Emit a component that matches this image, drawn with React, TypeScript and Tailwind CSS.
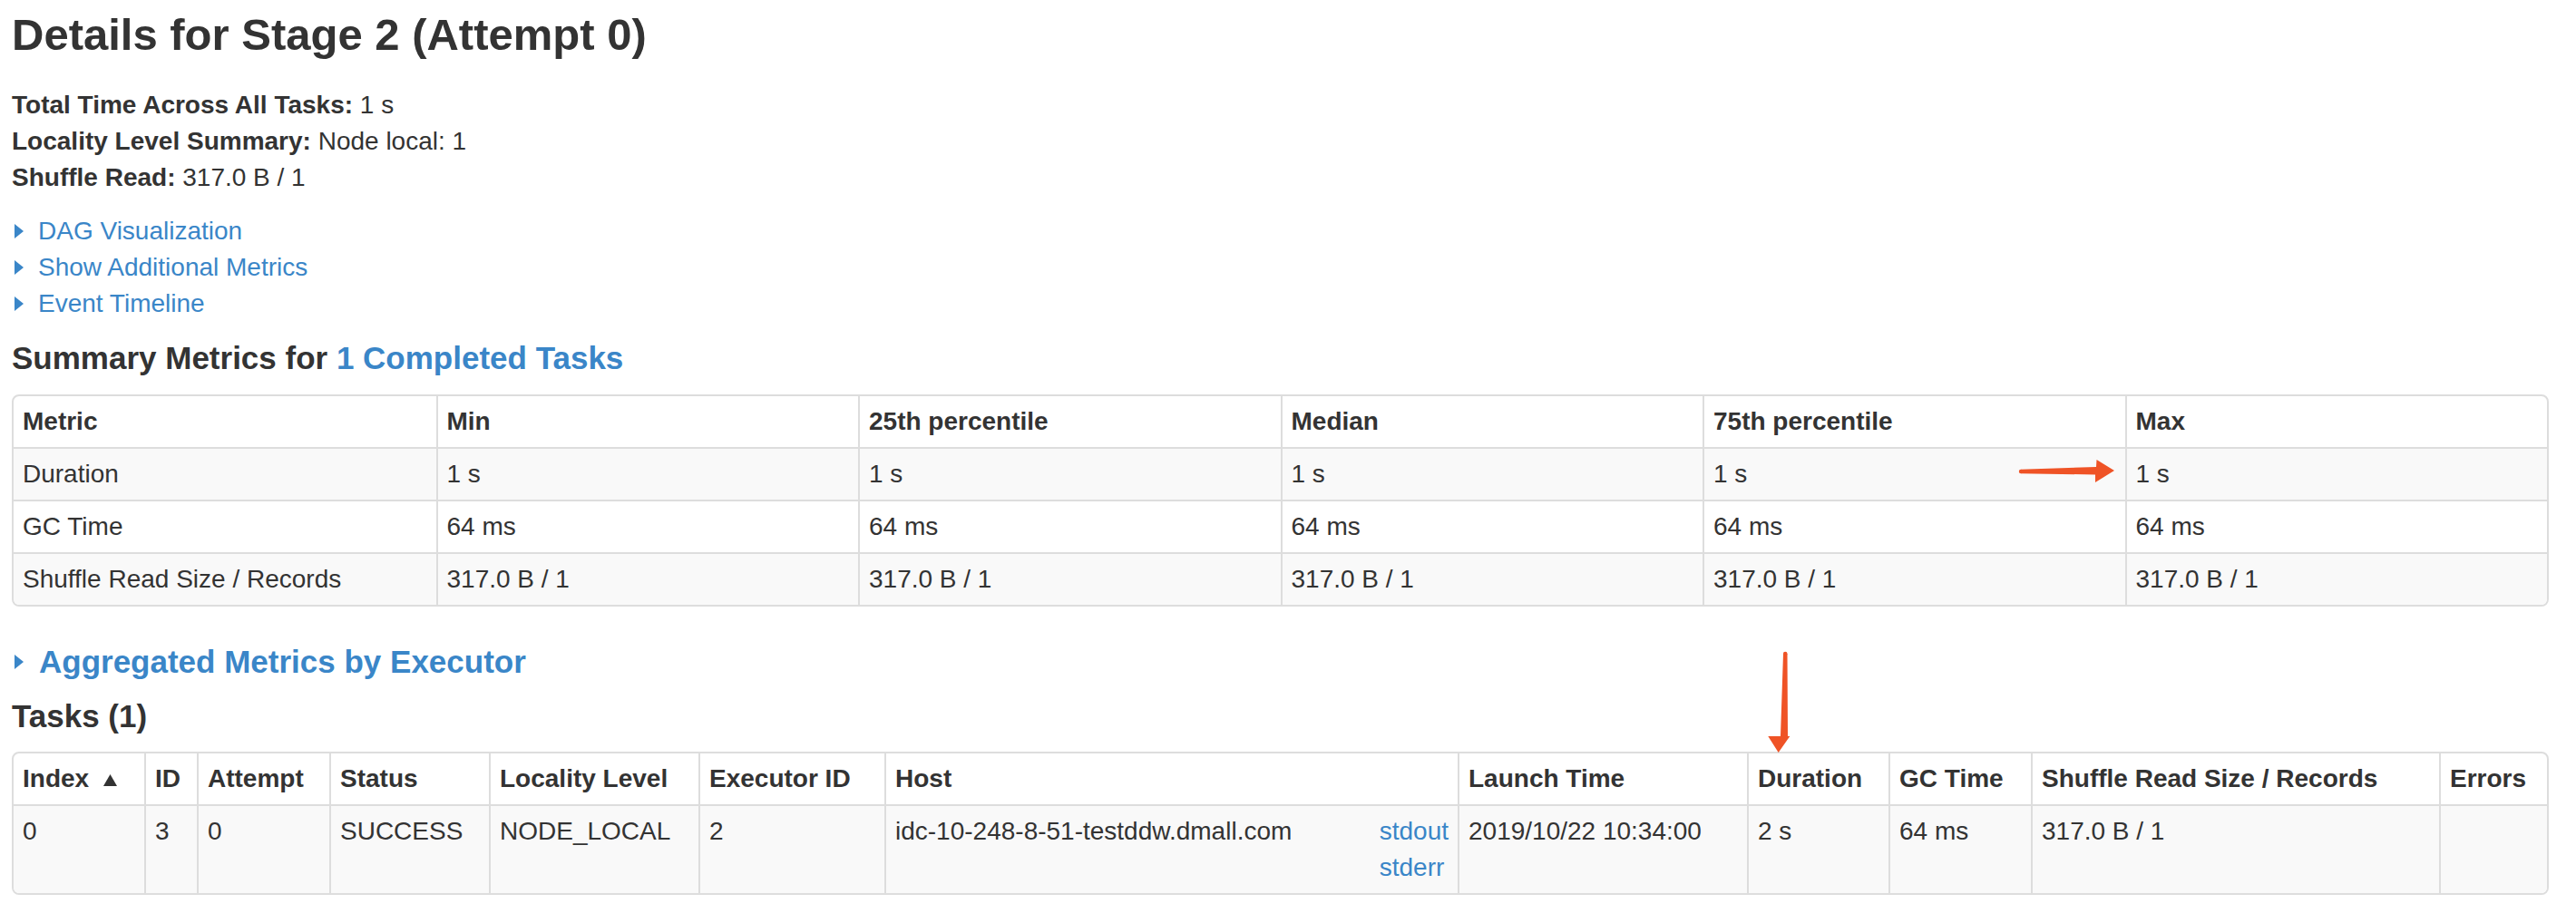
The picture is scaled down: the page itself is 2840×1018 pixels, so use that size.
const LINK = 'text-[#3a86c8]'

function Arrow() {
  return <span className="inline-block w-0 h-0 border-y-[8px] border-y-transparent border-l-[10px] border-l-[#3a86c8]" />
}

const summaryCols = ['Metric', 'Min', '25th percentile', 'Median', '75th percentile', 'Max']
const summaryRows = [
  ['Duration', '1 s', '1 s', '1 s', '1 s', '1 s'],
  ['GC Time', '64 ms', '64 ms', '64 ms', '64 ms', '64 ms'],
  ['Shuffle Read Size / Records', '317.0 B / 1', '317.0 B / 1', '317.0 B / 1', '317.0 B / 1', '317.0 B / 1'],
]

const taskCols = [
  { label: 'Index', w: 144 },
  { label: 'ID', w: 58 },
  { label: 'Attempt', w: 146 },
  { label: 'Status', w: 176 },
  { label: 'Locality Level', w: 231 },
  { label: 'Executor ID', w: 205 },
  { label: 'Host', w: 632 },
  { label: 'Launch Time', w: 319 },
  { label: 'Duration', w: 156 },
  { label: 'GC Time', w: 157 },
  { label: 'Shuffle Read Size / Records', w: 450 },
  { label: 'Errors', w: 119 },
]

function cellCls(col: number, row: number, head: boolean) {
  return [
    'px-[10px] py-[8px] text-left',
    head ? 'font-bold align-bottom' : 'font-normal align-top',
    col === 0 ? '' : 'border-l-2 border-l-[#ddd]',
    row === 0 ? '' : 'border-t-2 border-t-[#ddd]',
  ].join(' ')
}

export default function App() {
  return (
    <div className="relative h-[1018px] overflow-hidden bg-white text-[#333] pl-[13px] pr-[30px] font-['Liberation_Sans',Arial,Helvetica,sans-serif] text-[28px] leading-[40px]">
      <h3 className="text-[49px] leading-[76px] font-bold">Details for Stage 2 (Attempt 0)</h3>

      <ul className="mt-[20px]">
        <li><strong>Total Time Across All Tasks:</strong> 1 s</li>
        <li><strong>Locality Level Summary:</strong> Node local: 1</li>
        <li><strong>Shuffle Read:</strong> 317.0 B / 1</li>
      </ul>

      <div className="mt-[19px]">
        {['DAG Visualization', 'Show Additional Metrics', 'Event Timeline'].map(t => (
          <div key={t} className="flex items-center pl-[3px]">
            <Arrow />
            <a className={`${LINK} ml-[16px]`}>{t}</a>
          </div>
        ))}
      </div>

      <h4 className="mt-[20px] text-[35px] leading-[40px] font-bold">
        Summary Metrics for <a className={LINK}>1 Completed Tasks</a>
      </h4>

      <div className="mt-[20px] border-2 border-[#ddd] rounded-[8px] overflow-hidden">
        <table className="w-full table-fixed border-separate border-spacing-0">
          <thead>
            <tr>
              {summaryCols.map((c, i) => (
                <th key={c} className={cellCls(i, 0, true)}>{c}</th>
              ))}
            </tr>
          </thead>
          <tbody>
            {summaryRows.map((r, ri) => (
              <tr key={r[0]} className={ri % 2 === 0 ? 'bg-[#f9f9f9]' : 'bg-white'}>
                {r.map((v, ci) => (
                  <td key={ci} className={cellCls(ci, ri + 1, false)}>{v}</td>
                ))}
              </tr>
            ))}
          </tbody>
        </table>
      </div>

      <h4 className="mt-[41px] flex items-center pl-[3px] text-[35px] leading-[40px] font-bold">
        <Arrow />
        <a className={`${LINK} ml-[17px]`}>Aggregated Metrics by Executor</a>
      </h4>

      <h4 className="mt-[20px] text-[35px] leading-[40px] font-bold">Tasks (1)</h4>

      <div className="mt-[19px] border-2 border-[#ddd] rounded-[8px] overflow-hidden">
        <table className="w-full table-fixed border-separate border-spacing-0">
          <colgroup>
            {taskCols.map(c => (
              <col key={c.label} style={{ width: c.w }} />
            ))}
          </colgroup>
          <thead>
            <tr>
              {taskCols.map((c, i) => (
                <th key={c.label} className={cellCls(i, 0, true)}>
                  {c.label}
                  {i === 0 && (
                    <svg className="inline-block ml-[16px]" width="15" height="13" viewBox="0 0 15 13">
                      <path d="M7.5 0 L15 13 L0 13 Z" fill="#333" />
                    </svg>
                  )}
                </th>
              ))}
            </tr>
          </thead>
          <tbody>
            <tr className="bg-[#f9f9f9]">
              <td className={cellCls(0, 1, false)}>0</td>
              <td className={cellCls(1, 1, false)}>3</td>
              <td className={cellCls(2, 1, false)}>0</td>
              <td className={cellCls(3, 1, false)}>SUCCESS</td>
              <td className={cellCls(4, 1, false)}>NODE_LOCAL</td>
              <td className={cellCls(5, 1, false)}>2</td>
              <td className={cellCls(6, 1, false)}>
                <div className="flex justify-between">
                  <span>idc-10-248-8-51-testddw.dmall.com</span>
                  <div className="flex flex-col items-start">
                    <a className={LINK}>stdout</a>
                    <a className={LINK}>stderr</a>
                  </div>
                </div>
              </td>
              <td className={cellCls(7, 1, false)}>2019/10/22 10:34:00</td>
              <td className={cellCls(8, 1, false)}>2 s</td>
              <td className={cellCls(9, 1, false)}>64 ms</td>
              <td className={cellCls(10, 1, false)}>317.0 B / 1</td>
              <td className={cellCls(11, 1, false)}></td>
            </tr>
          </tbody>
        </table>
      </div>

      {/* annotation arrows drawn over the page */}
      <svg className="absolute left-0 top-0 pointer-events-none" width="2840" height="1018" viewBox="0 0 2840 1018">
        <g fill="#ef5326">
          <path d="M2228 517.8 L2311 515 L2311.5 507 L2331 519 L2310 532 L2310 523.5 L2228 522.2 Z" />
          <circle cx="2228" cy="520" r="2.2" />
          <path d="M1966 721 L1970.5 721 L1971 812 L1973.3 812 L1960.7 830 L1949.3 812 L1963 812 Z" />
          <circle cx="1968.2" cy="721" r="2.3" />
        </g>
      </svg>
    </div>
  )
}
